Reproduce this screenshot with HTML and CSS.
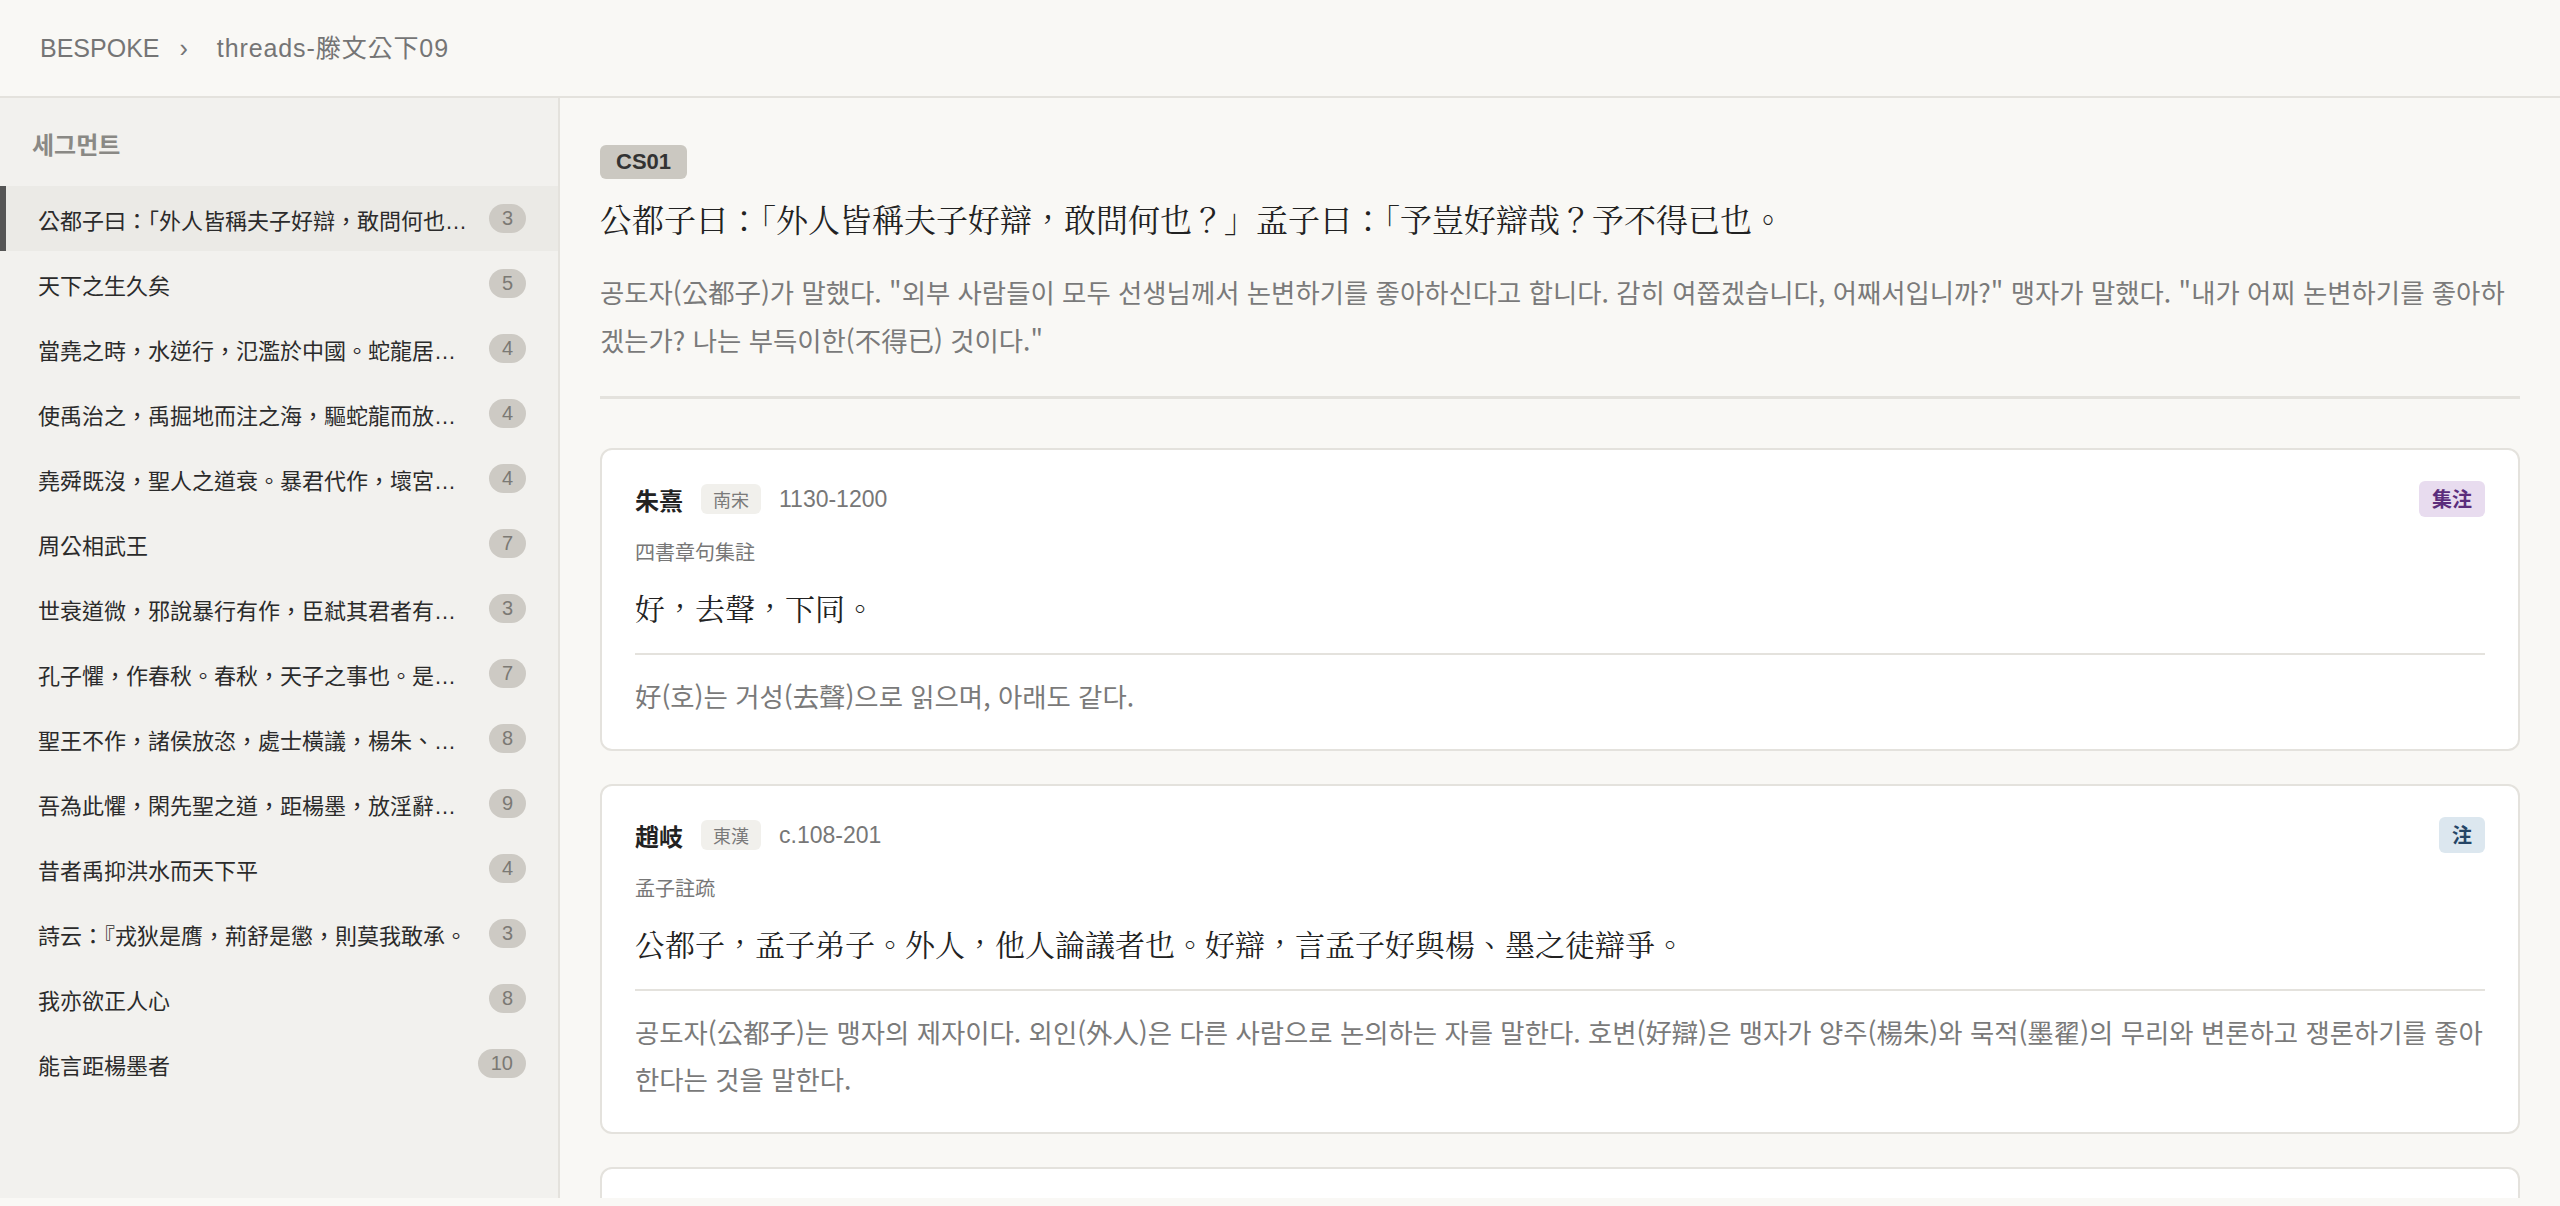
FILE: index.html
```html
<!DOCTYPE html>
<html lang="ko">
<head>
    <meta charset="UTF-8">
    <meta name="viewport" content="width=device-width, initial-scale=1.0">
    <title>BESPOKE · threads-滕文公下09</title>
    <link rel="stylesheet" href="styles.css">
</head>
<body>
    <header class="topbar">
        <nav class="crumbs">
            <span class="crumb">BESPOKE</span>
            <span class="sep">›</span>
            <span class="crumb">threads-滕文公下09</span>
        </nav>
    </header>

    <div class="app">
        <aside class="sidebar">
            <h2 class="side-title">세그먼트</h2>
            <ul class="seg-list" lang="zh-Hant">
                <li class="seg active"><span class="seg-label">公都子曰：「外人皆稱夫子好辯，敢問何也？」</span><span class="count">3</span></li>
                <li class="seg"><span class="seg-label">天下之生久矣</span><span class="count">5</span></li>
                <li class="seg"><span class="seg-label">當堯之時，水逆行，氾濫於中國。蛇龍居之，民無所定</span><span class="count">4</span></li>
                <li class="seg"><span class="seg-label">使禹治之，禹掘地而注之海，驅蛇龍而放之菹</span><span class="count">4</span></li>
                <li class="seg"><span class="seg-label">堯舜既沒，聖人之道衰。暴君代作，壞宮室以為汙池</span><span class="count">4</span></li>
                <li class="seg"><span class="seg-label">周公相武王</span><span class="count">7</span></li>
                <li class="seg"><span class="seg-label">世衰道微，邪說暴行有作，臣弒其君者有之，子弒其父者有之</span><span class="count">3</span></li>
                <li class="seg"><span class="seg-label">孔子懼，作春秋。春秋，天子之事也。是故孔子曰</span><span class="count">7</span></li>
                <li class="seg"><span class="seg-label">聖王不作，諸侯放恣，處士橫議，楊朱、墨翟之言盈天下</span><span class="count">8</span></li>
                <li class="seg"><span class="seg-label">吾為此懼，閑先聖之道，距楊墨，放淫辭，邪說者不得作</span><span class="count">9</span></li>
                <li class="seg"><span class="seg-label">昔者禹抑洪水而天下平</span><span class="count">4</span></li>
                <li class="seg"><span class="seg-label">詩云：『戎狄是膺，荊舒是懲，則莫我敢承。</span><span class="count">3</span></li>
                <li class="seg"><span class="seg-label">我亦欲正人心</span><span class="count">8</span></li>
                <li class="seg"><span class="seg-label">能言距楊墨者</span><span class="count">10</span></li>
            </ul>
        </aside>

        <main class="content">
            <section class="segment-head">
                <span class="seg-id">CS01</span>
                <h1 class="seg-text" lang="zh-Hant">公都子曰：「外人皆稱夫子好辯，敢問何也？」孟子曰：「予豈好辯哉？予不得已也。</h1>
                <p class="seg-trans">공도자(公都子)가 말했다. "외부 사람들이 모두 선생님께서 논변하기를 좋아하신다고 합니다. 감히 여쭙겠습니다, 어째서입니까?" 맹자가 말했다. "내가 어찌 논변하기를 좋아하겠는가? 나는 부득이한(不得已) 것이다."</p>
            </section>

            <article class="note">
                <div class="note-head">
                    <span class="author">朱熹</span>
                    <span class="era">南宋</span>
                    <span class="years">1130-1200</span>
                    <span class="kind kind-jizhu">集注</span>
                </div>
                <div class="source">四書章句集註</div>
                <p class="orig" lang="zh-Hant">好，去聲，下同。</p>
                <div class="rule"></div>
                <p class="trans">好(호)는 거성(去聲)으로 읽으며, 아래도 같다.</p>
            </article>

            <article class="note">
                <div class="note-head">
                    <span class="author">趙岐</span>
                    <span class="era">東漢</span>
                    <span class="years">c.108-201</span>
                    <span class="kind kind-zhu">注</span>
                </div>
                <div class="source">孟子註疏</div>
                <p class="orig" lang="zh-Hant">公都子，孟子弟子。外人，他人論議者也。好辯，言孟子好與楊、墨之徒辯爭。</p>
                <div class="rule"></div>
                <p class="trans">공도자(公都子)는 맹자의 제자이다. 외인(外人)은 다른 사람으로 논의하는 자를 말한다. 호변(好辯)은 맹자가 양주(楊朱)와 묵적(墨翟)의 무리와 변론하고 쟁론하기를 좋아한다는 것을 말한다.</p>
            </article>

            <article class="note">
                <div class="note-head">
                    <span class="author">孫奭</span>
                    <span class="era">北宋</span>
                    <span class="years">962-1033</span>
                    <span class="kind kind-zhu">疏</span>
                </div>
                <div class="source">孟子註疏</div>
                <p class="orig" lang="zh-Hant">此章言孟子之辯，非好辯也，不得已也。</p>
                <div class="rule"></div>
                <p class="trans">이 장은 맹자의 변론이 변론을 좋아해서가 아니라 부득이해서임을 말한다.</p>
            </article>
        </main>
    </div>
</body>
</html>
```

FILE: styles.css
```css
body {
    margin: 0;
    background-color: #f9f8f5;
    font-family: 'Liberation Sans', 'Noto Sans CJK KR', 'Noto Sans CJK TC', sans-serif;
    color: #2b2b2b;
    overflow: hidden;
}

/* top bar */
.topbar {
    height: 96px;
    display: flex;
    align-items: center;
    padding: 0 40px;
    border-bottom: 2px solid #e4e2dd;
    background-color: #f9f8f5;
}
.crumbs {
    display: flex;
    align-items: center;
    font-size: 25px;
    line-height: 30px;
    color: #757575;
}
.crumbs .sep {
    margin: 0 29px 0 20px;
}
.crumbs .crumb:last-child {
    letter-spacing: 0.9px;
}

.app {
    display: flex;
    height: 1100px;
}

/* sidebar */
.sidebar {
    width: 558px;
    flex-shrink: 0;
    background-color: #f2f1ee;
    border-right: 2px solid #e4e2dd;
    padding-top: 33px;
    overflow: hidden;
}
.side-title {
    margin: 0 0 25px 32px;
    font-size: 24px;
    line-height: 30px;
    font-weight: 700;
    color: #8a8985;
}
.seg-list {
    list-style: none;
    margin: 0;
    padding: 0;
}
.seg {
    display: flex;
    align-items: center;
    height: 65px;
    padding: 0 32px 0 38px;
    font-family: 'Liberation Sans', 'Noto Sans CJK TC', sans-serif;
    font-size: 22px;
    color: #2b2b2b;
}
.seg.active {
    background-color: #ebeae6;
    box-shadow: inset 6px 0 0 #555555;
}
.seg-label {
    flex: 1;
    min-width: 0;
    white-space: nowrap;
    overflow: hidden;
    text-overflow: ellipsis;
    margin-right: 20px;
}
.count {
    flex-shrink: 0;
    height: 29px;
    line-height: 29px;
    padding: 0 13px;
    border-radius: 15px;
    background-color: #cdcac4;
    color: #7b7974;
    font-size: 20px;
}

/* main column */
.content {
    flex: 1;
    min-width: 0;
    padding: 47px 40px 0;
    overflow: hidden;
}
.segment-head {
    padding-bottom: 32px;
    border-bottom: 3px solid #e4e2dd;
    margin-bottom: 49px;
}
.seg-id {
    display: inline-block;
    height: 34px;
    line-height: 34px;
    padding: 0 16px;
    border-radius: 6px;
    background-color: #cbc8c1;
    color: #333333;
    font-size: 22px;
    font-weight: 700;
}
.seg-text {
    margin: 15px 0 0;
    font-family: 'Noto Serif CJK TC', 'Noto Serif CJK SC', 'Noto Sans CJK TC', serif;
    font-size: 32px;
    line-height: 48px;
    font-weight: 400;
    color: #222222;
}
.seg-trans {
    margin: 26px 0 0;
    font-family: 'Noto Sans CJK KR', sans-serif;
    font-size: 26.4px;
    line-height: 48px;
    color: #7a7a7a;
}

/* commentary cards */
.note {
    background-color: #ffffff;
    border: 2px solid #e4e2dd;
    border-radius: 12px;
    padding: 31px 33px 30px;
    margin-bottom: 33px;
}
.note-head {
    display: flex;
    align-items: center;
    gap: 18px;
    height: 36px;
}
.author {
    font-family: 'Noto Sans CJK TC', sans-serif;
    font-size: 24px;
    font-weight: 700;
    color: #222222;
}
.era {
    height: 30px;
    line-height: 30px;
    padding: 0 12px;
    border-radius: 6px;
    background-color: #f1f0ec;
    color: #7a7a7a;
    font-family: 'Noto Sans CJK TC', sans-serif;
    font-size: 18px;
}
.years {
    font-size: 23px;
    color: #777777;
}
.kind {
    margin-left: auto;
    height: 36px;
    line-height: 36px;
    padding: 0 13px;
    border-radius: 6px;
    font-family: 'Noto Sans CJK TC', sans-serif;
    font-size: 20px;
    font-weight: 700;
}
.kind-jizhu {
    background-color: #e8dcef;
    color: #5b2d7c;
}
.kind-zhu {
    background-color: #dce7ef;
    color: #254566;
}
.source {
    margin-top: 20px;
    font-family: 'Noto Sans CJK TC', sans-serif;
    font-size: 20px;
    line-height: 30px;
    color: #777777;
}
.orig {
    margin: 16px 0 0;
    font-family: 'Noto Serif CJK TC', 'Noto Serif CJK SC', 'Noto Sans CJK TC', serif;
    font-size: 30px;
    line-height: 48px;
    color: #222222;
}
.rule {
    height: 2px;
    margin: 22px 0 17px;
    background-color: #e4e2dd;
}
.trans {
    margin: 0;
    font-family: 'Noto Sans CJK KR', sans-serif;
    font-size: 26.4px;
    line-height: 47px;
    color: #7a7a7a;
}
```
